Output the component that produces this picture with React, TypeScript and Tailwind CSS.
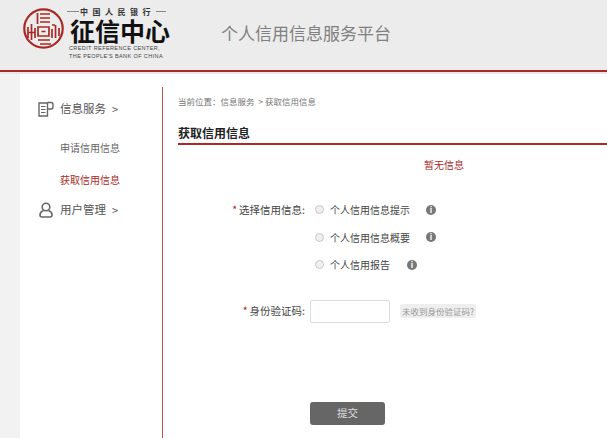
const font = { fontFamily: '"Noto Sans CJK SC", "Liberation Sans", sans-serif' };

function Seal() {
  return (
    <svg width="41" height="41" viewBox="0 0 41 41" className="mt-[1px] shrink-0">
      <circle cx="20.5" cy="20.500" r="19.200" fill="none" stroke="#a82a26" strokeWidth="2.200" />
      <g stroke="#a82a26" strokeWidth="1.700" fill="none">
        <path d="M14.500 5v11M17 6h10M17 10h10M17 14h10" />
        <path d="M5 19v11M8.500 16v16M12 20v10M5 24.500h7" />
        <path d="M15 19h11v9H15zM18.500 23.500h4" />
        <path d="M29 17h3M29 21v9M32.500 17v13M36 20v8" />
        <path d="M15 32h12M17 36h11" />
      </g>
    </svg>
  );
}

function Info({ ml }: { ml: string }) {
  return (
    <span className={`${ml} flex h-[10px] w-[10px] items-center justify-center rounded-full bg-[#777] text-[8px] font-bold leading-none text-white`}>i</span>
  );
}

function Radio({ label, ml }: { label: string; ml: string }) {
  return (
    <div className="flex h-[27.5px] items-center">
      <span className="h-[9px] w-[9px] rounded-full border border-[#c8c8c8] bg-[#efefef]" />
      <span className="ml-[6px] text-[10px] text-[#444]">{label}</span>
      <Info ml={ml} />
    </div>
  );
}

export default function App() {
  return (
    <div className="flex h-[438px] w-[607px] flex-col overflow-hidden bg-white" style={font}>
      <header className="flex h-[70px] items-start bg-[#ececec] pl-[23px] pt-[7px]">
        <Seal />
        <div className="ml-[3px] flex w-[104px] flex-col">
          <div className="flex h-[9px] items-center text-[8px] font-bold leading-[9px] text-[#333]">
            <span className="h-px w-[12px] bg-[#888]" />
            <span className="ml-[1px] mr-[1px] whitespace-nowrap tracking-[4.500px]">中国人民银行</span>
            <span className="h-px w-[10px] bg-[#888]" />
          </div>
          <div className="ml-[3px] whitespace-nowrap text-[25px] font-bold leading-[28px] text-[#111]">征信中心</div>
          <div className="ml-[2px] whitespace-nowrap text-[5.500px] leading-[8px] tracking-[0.400px] text-[#444]" style={{ fontFamily: '"Liberation Sans", sans-serif' }}>
            <div>CREDIT REFERENCE CENTER,</div>
            <div>THE PEOPLE'S BANK OF CHINA</div>
          </div>
        </div>
        <div className="ml-[50px] mt-[14px] text-[17px] leading-[24px] text-[#808080]">个人信用信息服务平台</div>
      </header>
      <div className="h-[2px] bg-[#a82a26]" />
      <div className="h-[2px] bg-[#e8e8e8]" />
      <div className="flex flex-1">
        <div className="w-[20px] bg-[#f2f2f2]" />
        <aside className="w-[142px] pl-[18px] pt-[24px] text-[#555]">
          <div className="flex h-[22px] items-center">
            <svg width="16" height="16" viewBox="0 0 16 16" fill="none" stroke="#666" strokeWidth="1.400">
              <path d="M1 2h8.500v13H1z" />
              <path d="M3 5.500h4.500M3 8.500h4.500M3 11.500h4.500" strokeWidth="1" />
              <path d="M9.500 1.500h3.500a2 2 0 0 1 2 2v2.500a2 2 0 0 1-2 2H9.500" />
            </svg>
            <span className="ml-[6px] text-[11.500px]">信息服务</span>
            <span className="ml-[6px] text-[11px]">&gt;</span>
          </div>
          <div className="ml-[22px] mt-[20px] text-[10px] leading-[16px] text-[#666]">申请信用信息</div>
          <div className="ml-[22px] mt-[16px] text-[10px] leading-[16px] text-[#a82a26]">获取信用信息</div>
          <div className="mt-[11px] flex h-[22px] items-center">
            <svg width="16" height="16" viewBox="0 0 16 16" fill="none" stroke="#666" strokeWidth="1.600">
              <circle cx="8" cy="5" r="3.800" />
              <path d="M5.500 8.500C3 9.500 2 11 2 13c0 1.200.8 2 2 2h8c1.200 0 2-.8 2-2 0-2-1-3.500-3.500-4.500" />
            </svg>
            <span className="ml-[6px] text-[11.500px]">用户管理</span>
            <span className="ml-[6px] text-[11px]">&gt;</span>
          </div>
        </aside>
        <div className="mt-[13px] w-[1px] bg-[#b0544f]" />
        <main className="flex-1 pl-[15px]">
          <div className="pt-[21px] text-[8.500px] leading-[12px] text-[#777]">当前位置：信息服务 &nbsp;&gt; 获取信用信息</div>
          <div className="mt-[15px] flex h-[23px] items-center border-b-[2px] border-[#a82a26] text-[12px] font-bold text-[#222]">获取信用信息</div>
          <div className="mt-[13px] pl-[246px] text-[10px] leading-[14px] text-[#a82a26]">暂无信息</div>
          <div className="mt-[24px] flex">
            <div className="flex h-[27px] w-[127px] items-center justify-end text-[10.500px] text-[#444]"><span className="mr-[2px] text-[#a82a26]">*</span>选择信用信息:</div>
            <div className="ml-[10px] flex flex-col">
              <Radio label="个人信用信息提示" ml="ml-[16px]" />
              <Radio label="个人信用信息概要" ml="ml-[16px]" />
              <Radio label="个人信用报告" ml="ml-[17px]" />
            </div>
          </div>
          <div className="mt-[21px] flex items-center">
            <div className="w-[127px] text-right text-[10.500px] text-[#444]"><span className="mr-[2px] text-[#a82a26]">*</span>身份验证码:</div>
            <div className="ml-[5px] h-[23px] w-[80px] rounded-[2px] border border-[#ddd] bg-white" />
            <div className="ml-[10px] rounded-[2px] bg-[#eee] px-[2px] text-[8.500px] leading-[14px] text-[#999]">未收到身份验证码?</div>
          </div>
          <button className="ml-[132px] mt-[79px] block h-[23px] w-[75px] rounded-[3px] bg-[#666] text-[10.500px] text-[#ddd]">提交</button>
        </main>
      </div>
    </div>
  );
}
